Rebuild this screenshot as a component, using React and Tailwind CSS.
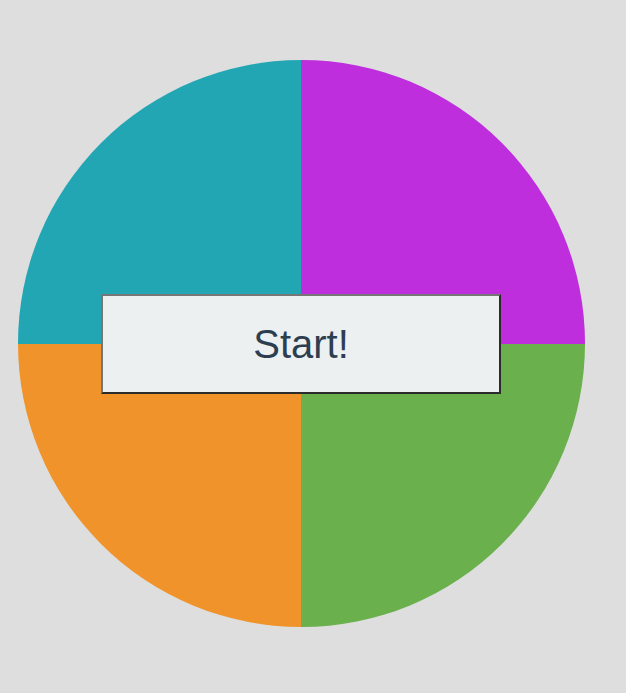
import React from "react";

function App() {
  return (
    <div className="min-h-[693px] w-full bg-[#dedede] pl-[18px] pt-[60px]">
      <div className="relative h-[567px] w-[567px]">
        {/* wheel */}
        <div className="grid h-full w-full grid-cols-[283px_284px] grid-rows-[284px_283px] overflow-hidden rounded-full">
          <div className="bg-[#22a6b3]" />
          <div className="bg-[#be2edd]" />
          <div className="bg-[#f0932b]" />
          <div className="bg-[#6ab04c]" />
        </div>

        {/* start button */}
        <button
          type="button"
          className="absolute left-[83px] top-[234px] h-[100px] w-[400px] border-2 border-t-[#767676] border-l-[#767676] border-b-[#2b2b2b] border-r-[#2b2b2b] bg-[#ecf0f1] font-['Liberation_Sans',Arial,sans-serif] text-[40px] text-[#2c3e50]"
        >
          Start!
        </button>
      </div>
    </div>
  );
}

export default App;
